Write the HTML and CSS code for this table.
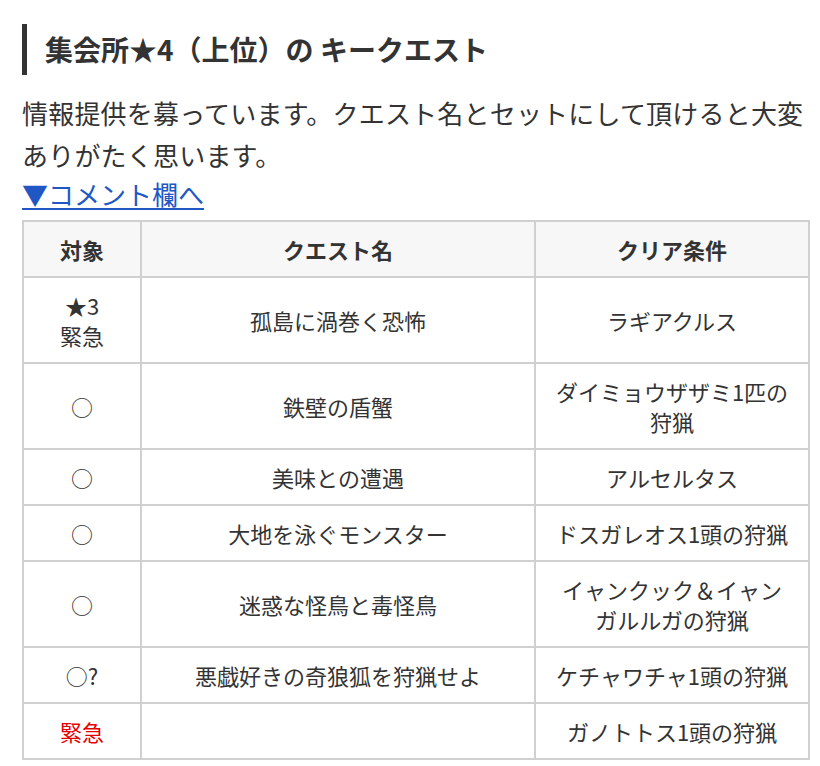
FILE: index.html
```html
<!DOCTYPE html>
<html lang="ja">
<head>
<meta charset="utf-8">
<title>集会所★4（上位）の キークエスト</title>
<link rel="stylesheet" href="styles.css">
</head>
<body>
<main class="page">
  <h2 class="heading">集会所★4（上位）の キークエスト</h2>
  <p class="lead">情報提供を募っています。クエスト名とセットにして頂けると大変ありがたく思います。</p>
  <p class="jump"><a href="#comments">▼コメント欄へ</a></p>
  <table class="quests">
    <colgroup>
      <col class="c1">
      <col class="c2">
      <col class="c3">
    </colgroup>
    <thead>
      <tr><th>対象</th><th>クエスト名</th><th>クリア条件</th></tr>
    </thead>
    <tbody>
      <tr><td>★3<br>緊急</td><td>孤島に渦巻く恐怖</td><td>ラギアクルス</td></tr>
      <tr><td>○</td><td>鉄壁の盾蟹</td><td>ダイミョウザザミ1匹の狩猟</td></tr>
      <tr><td>○</td><td>美味との遭遇</td><td>アルセルタス</td></tr>
      <tr><td>○</td><td>大地を泳ぐモンスター</td><td>ドスガレオス1頭の狩猟</td></tr>
      <tr><td>○</td><td>迷惑な怪鳥と毒怪鳥</td><td>イャンクック＆イャンガルルガの狩猟</td></tr>
      <tr><td>○?</td><td>悪戯好きの奇狼狐を狩猟せよ</td><td>ケチャワチャ1頭の狩猟</td></tr>
      <tr><td class="urgent">緊急</td><td></td><td>ガノトトス1頭の狩猟</td></tr>
    </tbody>
  </table>
</main>
</body>
</html>
```
FILE: styles.css
```css
html, body {
  margin: 0;
  padding: 0;
  background: #fff;
}
body {
  font-family: "Noto Sans CJK JP", "Noto Sans", sans-serif;
  color: #333;
}
.page {
  padding: 24px 12px 0 22px;
  width: 786px;
}
.heading {
  margin: 0;
  border-left: 5px solid #333;
  padding-left: 18px;
  font-size: 28px;
  line-height: 51px;
  font-weight: bold;
  color: #333;
}
.lead {
  margin: 17px 0 0;
  font-size: 26px;
  line-height: 42px;
  letter-spacing: 0.2px;
}
.jump {
  margin: 0;
  font-size: 26px;
  line-height: 36px;
}
.jump a {
  color: #2157c4;
  text-decoration: underline;
  text-underline-offset: 3px;
}
.quests {
  margin-top: 8px;
  width: 786px;
  border-collapse: collapse;
  table-layout: fixed;
  font-size: 22px;
  line-height: 30px;
}
.c1 { width: 118px; }
.c2 { width: 394px; }
.c3 { width: 274px; }
.quests th,
.quests td {
  border: 2px solid #d0d0d0;
  padding: 12px 16px;
  text-align: center;
  vertical-align: middle;
  color: #333;
}
.quests th {
  background: #f7f7f7;
  font-weight: bold;
}
.quests td.urgent {
  color: #e60000;
}
```
